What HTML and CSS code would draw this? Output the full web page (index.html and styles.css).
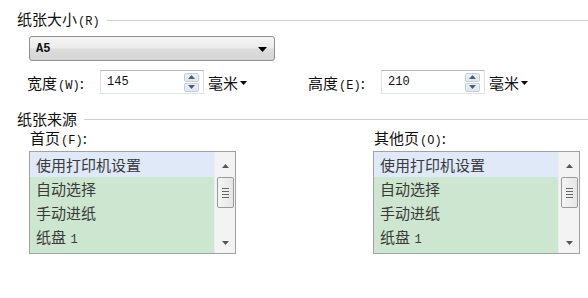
FILE: index.html
```html
<!DOCTYPE html>
<html lang="zh-CN">
<head>
<meta charset="utf-8">
<title>页面设置</title>
<link rel="stylesheet" href="styles.css">
</head>
<body>
<div class="dlg">
  <div class="group-title title-size"><span class="gt-text">纸张大小<span class="a">(R)</span></span><div class="rule"></div></div>
  <div class="combo">
    <span class="combo-val">A5</span>
    <svg class="combo-arrow" width="9" height="5" viewBox="0 0 9 5"><path d="M0 0H9L4.5 5Z" fill="#000"/></svg>
  </div>
  <div class="size-row">
    <div class="field field-w">
      <span class="flabel">宽度<span class="a">(W)</span>:</span>
      <div class="num">
        <span class="num-val">145</span>
        <div class="spin"><span class="spin-up"><svg width="7" height="4" viewBox="0 0 7 4"><path d="M0 4H7L3.5 0Z" fill="#4b5c74"/></svg></span><span class="spin-dn"><svg width="7" height="4" viewBox="0 0 7 4"><path d="M0 0H7L3.5 4Z" fill="#4b5c74"/></svg></span></div>
      </div>
      <span class="unit">毫米<svg class="unit-arrow" width="7" height="4" viewBox="0 0 7 4"><path d="M0 0H7L3.5 4Z" fill="#000"/></svg></span>
    </div>
    <div class="field">
      <span class="flabel">高度<span class="a">(E)</span>:</span>
      <div class="num">
        <span class="num-val">210</span>
        <div class="spin"><span class="spin-up"><svg width="7" height="4" viewBox="0 0 7 4"><path d="M0 4H7L3.5 0Z" fill="#4b5c74"/></svg></span><span class="spin-dn"><svg width="7" height="4" viewBox="0 0 7 4"><path d="M0 0H7L3.5 4Z" fill="#4b5c74"/></svg></span></div>
      </div>
      <span class="unit">毫米<svg class="unit-arrow" width="7" height="4" viewBox="0 0 7 4"><path d="M0 0H7L3.5 4Z" fill="#000"/></svg></span>
    </div>
  </div>
  <div class="group-title title-src"><span class="gt-text">纸张来源</span><div class="rule"></div></div>
  <div class="sources">
    <div class="src-col src-first">
      <div class="src-label">首页<span class="a">(F)</span>:</div>
      <div class="listbox">
        <div class="items">
          <div class="item item-hot">使用打印机设置</div>
          <div class="item item-sel">自动选择</div>
          <div class="item item-sel">手动进纸</div>
          <div class="item item-sel">纸盘 <span class="a">1</span></div>
        </div>
        <div class="vscroll">
          <svg class="sb-arrow" width="7" height="4" viewBox="0 0 7 4"><path d="M0 4H7L3.5 0Z" fill="#555"/></svg>
          <div class="thumb"><i></i><i></i><i></i><i></i></div>
          <div class="sb-space"></div>
          <svg class="sb-arrow" width="7" height="4" viewBox="0 0 7 4"><path d="M0 0H7L3.5 4Z" fill="#555"/></svg>
        </div>
      </div>
    </div>
    <div class="src-col">
      <div class="src-label">其他页<span class="a">(O)</span>:</div>
      <div class="listbox">
        <div class="items">
          <div class="item item-hot">使用打印机设置</div>
          <div class="item item-sel">自动选择</div>
          <div class="item item-sel">手动进纸</div>
          <div class="item item-sel">纸盘 <span class="a">1</span></div>
        </div>
        <div class="vscroll">
          <svg class="sb-arrow" width="7" height="4" viewBox="0 0 7 4"><path d="M0 4H7L3.5 0Z" fill="#555"/></svg>
          <div class="thumb"><i></i><i></i><i></i><i></i></div>
          <div class="sb-space"></div>
          <svg class="sb-arrow" width="7" height="4" viewBox="0 0 7 4"><path d="M0 0H7L3.5 4Z" fill="#555"/></svg>
        </div>
      </div>
    </div>
  </div>
</div>
</body>
</html>
```

FILE: styles.css
```css
* { box-sizing: border-box; }
html, body { margin: 0; padding: 0; background: #fff; }
body {
  width: 588px;
  height: 298px;
  overflow: hidden;
  font-family: "Noto Sans CJK SC", sans-serif;
  font-size: 15px;
  color: #111;
}
.a {
  font-family: "Liberation Mono", monospace;
  font-size: 12px;
  margin-left: 1px;
}
.dlg {
  padding: 11px 0 0 17px;
  display: flex;
  flex-direction: column;
}
.group-title {
  display: flex;
  align-items: center;
  height: 18px;
  line-height: 18px;
}
.gt-text { white-space: nowrap; }
.rule {
  flex: 1;
  height: 1px;
  background: #cfcfcf;
  margin-left: 7px;
}
.combo {
  margin: 7px 0 0 12px;
  width: 246px;
  height: 25px;
  border: 1px solid #8e8f8f;
  border-radius: 3px;
  background: linear-gradient(#f5f5f5 0%, #ebebeb 48%, #dddddd 52%, #d4d4d4 100%);
  display: flex;
  align-items: center;
  justify-content: space-between;
  padding: 0 7px 0 6px;
}
.combo-val {
  font-family: "Liberation Mono", monospace;
  font-size: 12px;
  font-weight: bold;
}
.combo-arrow { display: block; margin-top: 1px; }
.size-row {
  display: flex;
  margin: 9px 0 0 10px;
  height: 24px;
}
.field {
  display: flex;
  align-items: center;
}
.field-w { width: 281px; flex: none; }
.flabel { width: 73px; flex: none; white-space: nowrap; }
.num {
  width: 104px;
  flex: none;
  height: 24px;
  border: 1px solid #dde2e8;
  border-top-color: #b5b9be;
  display: flex;
  align-items: center;
  justify-content: space-between;
  padding: 0 4px 0 6px;
}
.num-val {
  font-family: "Liberation Mono", monospace;
  font-size: 12px;
}
.spin {
  width: 15px;
  height: 19px;
  display: flex;
  flex-direction: column;
  gap: 1px;
}
.spin span {
  flex: 1;
  display: flex;
  align-items: center;
  justify-content: center;
  background: linear-gradient(#eef2f7, #dfe6ee);
  border: 1px solid #c7ced8;
  border-radius: 2px;
}
.spin svg { display: block; }
.unit {
  margin-left: 4px;
  display: flex;
  align-items: center;
  white-space: nowrap;
}
.unit-arrow { margin-left: 2px; margin-top: 2px; }
.title-src { margin-top: 16px; }
.sources {
  display: flex;
  margin: 0 0 0 12px;
}
.src-col { display: flex; flex-direction: column; }
.src-first { width: 344px; flex: none; }
.src-label {
  height: 23px;
  line-height: 20px;
  padding-left: 1px;
  white-space: nowrap;
}
.listbox {
  width: 207px;
  height: 103px;
  border: 1px solid #a2a2a2;
  display: flex;
  overflow: hidden;
}
.items {
  flex: 1;
  overflow: hidden;
  background: #cde6cf;
}
.item {
  height: 24px;
  line-height: 24px;
  padding-left: 6px;
  color: #3a3a3a;
  white-space: nowrap;
}
.item-hot { height: 25px; line-height: 25px; background: #dfe9f8; }
.item-sel { background: #cde6cf; }
.vscroll {
  width: 21px;
  background: #f3f3f3;
  border-left: 1px solid #ececec;
  display: flex;
  flex-direction: column;
  align-items: center;
  padding: 12px 0 8px;
}
.sb-arrow { display: block; }
.thumb {
  margin-top: 9px;
  width: 17px;
  height: 31px;
  border: 1px solid #9a9a9a;
  border-radius: 2px;
  background: linear-gradient(90deg, #f4f4f4, #e6e6e6);
  display: flex;
  flex-direction: column;
  align-items: center;
  justify-content: center;
  gap: 2px;
}
.thumb i {
  display: block;
  width: 7px;
  height: 1px;
  background: #666;
}
.sb-space { flex: 1; }
```
